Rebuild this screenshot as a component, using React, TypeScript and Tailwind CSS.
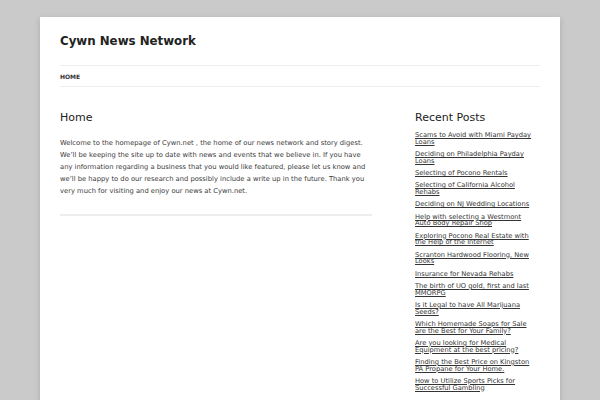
const POSTS = [
  'Scams to Avoid with Miami Payday Loans',
  'Deciding on Philadelphia Payday Loans',
  'Selecting of Pocono Rentals',
  'Selecting of California Alcohol Rehabs',
  'Deciding on NJ Wedding Locations',
  'Help with selecting a Westmont Auto Body Repair Shop',
  'Exploring Pocono Real Estate with the Help of the Internet',
  'Scranton Hardwood Flooring, New Looks',
  'Insurance for Nevada Rehabs',
  'The birth of UO gold, first and last MMORPG',
  'Is it Legal to have All Marijuana Seeds?',
  'Which Homemade Soaps for Sale are the Best for Your Family?',
  'Are you looking for Medical Equipment at the best pricing?',
  'Finding the Best Price on Kingston PA Propane for Your Home.',
  'How to Utilize Sports Picks for Successful Gambling',
];

export default function App() {
  return (
    <div
      className="h-[400px] w-[600px] overflow-hidden bg-[#cacaca] pt-[17px]"
      style={{ fontFamily: '"DejaVu Sans", Verdana, sans-serif' }}
    >
      <div className="mx-auto h-[420px] w-[520px] bg-white px-5 pt-4 shadow-[0_2px_6px_rgba(100,100,100,0.3)]">
        {/* Header */}
        <header>
          <h1 className="text-[11.8px] font-bold leading-4 text-[#222]">Cywn News Network</h1>
          <nav className="mt-4 flex h-[22px] items-center border-y border-[#ededed]">
            <a className="text-[6px] font-bold uppercase text-[#333]">Home</a>
          </nav>
        </header>

        <div className="mt-6 flex justify-between">
          {/* Main content */}
          <main className="w-[312px]">
            <article className="border-b-2 border-[#ededed] pb-[17px]">
              <h2 className="text-[11px] font-normal leading-[14px] text-[#222]">Home</h2>
              <p className="mt-3 text-[6.75px] leading-3 text-[#3a3a3a]">
                Welcome to the homepage of Cywn.net , the home of our news network and story digest.
                We’ll be keeping the site up to date with news and events that we believe in. If you
                have any information regarding a business that you would like featured, please let
                us know and we’ll be happy to do our research and possibly include a write up in the
                future. Thank you very much for visiting and enjoy our news at Cywn.net.
              </p>
            </article>
          </main>

          {/* Sidebar */}
          <aside className="w-[125px]">
            <h3 className="text-[11px] font-normal leading-[14px] text-[#222]">Recent Posts</h3>
            <ul className="mt-[7px] w-[120px]">
              {POSTS.map((p) => (
                <li key={p} className="mb-[5.6px] text-[6.7px] leading-[6.7px]">
                  <a className="text-[#333] underline">{p}</a>
                </li>
              ))}
            </ul>
          </aside>
        </div>
      </div>
    </div>
  );
}
